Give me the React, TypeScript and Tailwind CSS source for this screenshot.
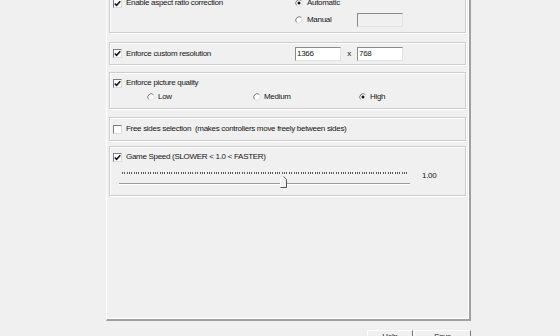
import React from "react";

const Check = ({ checked }: { checked?: boolean }) => (
  <span className="w-[9px] h-[9px] shrink-0 bg-white border border-[#7c7c7c] border-r-[#dcdcdc] border-b-[#dcdcdc] flex items-center justify-center">
    {checked && (
      <svg width="7" height="7" viewBox="0 0 7 7">
        <path d="M0.8 3.4 L2.6 5.3 L6.3 1.2" stroke="#111" strokeWidth="1.5" fill="none" />
      </svg>
    )}
  </span>
);

const Radio = ({ on }: { on?: boolean }) => (
  <svg width="8" height="8" viewBox="0 0 8 8" className="shrink-0">
    <circle cx="4" cy="4" r="3.4" fill="#fff" />
    <path d="M6.4 1.6 A3.4 3.4 0 0 0 1.6 6.4" stroke="#7a7a7a" strokeWidth="1" fill="none" />
    <path d="M6.4 1.6 A3.4 3.4 0 0 1 1.6 6.4" stroke="#dedede" strokeWidth="1" fill="none" />
    {on && <circle cx="4" cy="4" r="1.5" fill="#111" />}
  </svg>
);

const TextBox = ({ value, disabled }: { value?: string; disabled?: boolean }) => (
  <div
    className={
      "w-[46px] h-[14px] shrink-0 pl-[1px] border border-[#8a8a8a] border-r-[#e2e2e2] border-b-[#e2e2e2] leading-[12px] " +
      (disabled ? "bg-[#f0f0f0]" : "bg-white")
    }
  >
    {value}
  </div>
);

const Group = ({ className, children }: { className: string; children: React.ReactNode }) => (
  <div
    className={
      "ml-[2px] mr-[3px] pl-[3px] border border-[#cdcdcd] shadow-[1px_1px_0_#fff,inset_1px_1px_0_#fff] " +
      className
    }
  >
    {children}
  </div>
);

export default function App() {
  return (
    <div className="w-[560px] h-[336px] overflow-hidden bg-[#f0f0f0] font-['Liberation_Sans',Arial,sans-serif] text-[8px] tracking-[-0.3px] leading-[12px] text-[#151515]">
      {/* TAB PAGE */}
      <div className="ml-[106px] w-[365px] h-[333px] -mt-[12px] pt-[2px] flex flex-col border-l border-l-white border-r-2 border-r-[#a0a0a0] border-b-2 border-b-[#a0a0a0] shadow-[inset_-1px_-1px_0_#fff]">
        {/* ASPECT RATIO */}
        <Group className="h-[43px] pt-[6px] flex flex-col">
          <div className="h-[12px] flex items-center">
            <div className="w-[182px] flex items-center gap-[4px]">
              <Check checked />
              <span>Enable aspect ratio correction</span>
            </div>
            <div className="flex items-center gap-[4px]">
              <Radio on />
              <span>Automatic</span>
            </div>
          </div>
          <div className="mt-[4px] h-[14px] flex items-center">
            <div className="w-[182px]" />
            <div className="w-[62px] flex items-center gap-[4px]">
              <Radio />
              <span>Manual</span>
            </div>
            <TextBox disabled />
          </div>
        </Group>

        {/* RESOLUTION */}
        <Group className="mt-[9px] h-[23px] flex items-center">
          <div className="w-[182px] flex items-center gap-[4px]">
            <Check checked />
            <span>Enforce custom resolution</span>
          </div>
          <TextBox value="1366" />
          <span className="w-[16px] text-center">x</span>
          <TextBox value="768" />
        </Group>

        {/* PICTURE QUALITY */}
        <Group className="mt-[7px] h-[37px] pt-[4px] flex flex-col">
          <div className="h-[12px] flex items-center gap-[4px]">
            <Check checked />
            <span>Enforce picture quality</span>
          </div>
          <div className="mt-[2px] h-[12px] pl-[34px] flex items-center">
            <div className="w-[118px] flex items-center gap-[3px]">
              <Radio />
              <span>Low</span>
            </div>
            <div className="w-[118px] flex items-center gap-[3px]">
              <Radio />
              <span>Medium</span>
            </div>
            <div className="w-[118px] flex items-center gap-[3px]">
              <Radio on />
              <span>High</span>
            </div>
          </div>
        </Group>

        {/* FREE SIDES */}
        <Group className="mt-[8px] h-[24px] flex items-center gap-[4px]">
          <Check />
          <span className="whitespace-pre">Free sides selection  (makes controllers move freely between sides)</span>
        </Group>

        {/* GAME SPEED */}
        <Group className="mt-[5px] h-[50px] pt-[4px] flex flex-col">
          <div className="h-[12px] flex items-center gap-[4px]">
            <Check checked />
            <span>Game Speed (SLOWER &lt; 1.0 &lt; FASTER)</span>
          </div>
          <div className="mt-[7px] flex items-start">
            <div className="relative ml-[6px] w-[291px] h-[19px]">
              <div className="mt-[2px] ml-[3px] mr-[2px] h-[2px] bg-[repeating-linear-gradient(90deg,#5a5a5a_0px,#5a5a5a_1px,transparent_1px,transparent_2.35px)]" />
              <div className="mt-[9px] h-[2px] border-t border-[#9a9a9a] bg-white" />
              <svg width="7" height="12" viewBox="0 0 7 12" className="absolute left-[161px] top-[6px]">
                <polygon points="3.5,0.5 6.5,3.5 6.5,11.5 0.5,11.5 0.5,3.5" fill="#f0f0f0" />
                <path d="M0.5 11 L0.5 3.5 L3.5 0.5" stroke="#fff" strokeWidth="1" fill="none" />
                <path d="M3.5 0.5 L6.5 3.5 L6.5 11.5 L0.5 11.5" stroke="#555" strokeWidth="1" fill="none" />
              </svg>
            </div>
            <span className="ml-[12px]">1.00</span>
          </div>
        </Group>
      </div>

      {/* BUTTONS */}
      <div className="mt-[9px] pr-[89px] flex justify-end gap-[1px]">
        <div className="w-[46px] h-[22px] flex justify-center border border-white border-r-[#7a7a7a] border-b-[#7a7a7a]">
          Help
        </div>
        <div className="w-[57px] h-[22px] flex justify-center border border-white border-r-[#7a7a7a] border-b-[#7a7a7a]">
          Save
        </div>
      </div>
    </div>
  );
}
